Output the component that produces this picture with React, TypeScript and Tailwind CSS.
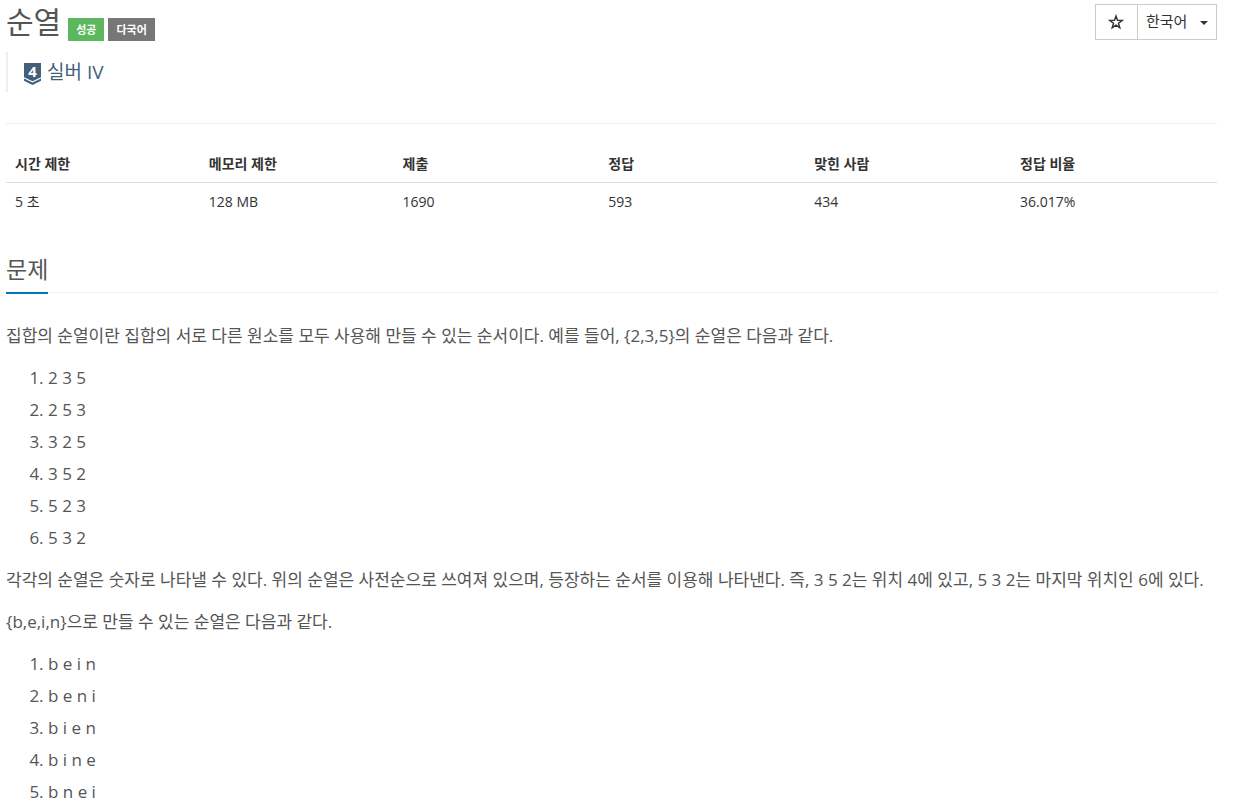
import React from 'react'

const limits = [
  { label: '시간 제한', value: '5 초', width: 'w-[16%]' },
  { label: '메모리 제한', value: '128 MB', width: 'w-[16%]' },
  { label: '제출', value: '1690', width: 'w-[17%]' },
  { label: '정답', value: '593', width: 'w-[17%]' },
  { label: '맞힌 사람', value: '434', width: 'w-[17%]' },
  { label: '정답 비율', value: '36.017%', width: 'w-[17%]' },
]

const numberPermutations = ['2 3 5', '2 5 3', '3 2 5', '3 5 2', '5 2 3', '5 3 2']
const letterPermutations = ['b e i n', 'b e n i', 'b i e n', 'b i n e', 'b n e i']

const TierIcon = () => (
  <svg viewBox="0 -3 17 25" className="h-[25px] w-[17px] overflow-visible" aria-hidden="true">
    <path d="M0 0h17v14.2L8.5 18.2 0 14.2z" fill="#435f7a" />
    <path d="M0 15.6l8.5 4 8.5-4v2.2L8.5 22 0 17.8z" fill="#435f7a" />
    <text
      x="8.5"
      y="14"
      textAnchor="middle"
      fill="#fff"
      className="font-['Open_Sans'] text-[15px] font-bold"
    >
      4
    </text>
  </svg>
)

const PermutationList = ({ items }: { items: string[] }) => (
  <ol className="mb-2.5 list-decimal pl-[42px]">
    {items.map((item) => (
      <li key={item}>{item}</li>
    ))}
  </ol>
)

const App = () => {
  return (
    <main className="bg-white pt-1 pr-6 pl-1.5 font-['Open_Sans','Noto_Sans_CJK_KR',sans-serif] text-[#555]">
      <header className="flex items-start justify-between">
        <div className="flex items-end gap-1">
          <h1 className="mr-[3px] text-[30px] leading-9">순열</h1>
          <span className="-mb-px bg-[#5cb85c] px-2 text-[11px] leading-[23px] font-bold text-white">성공</span>
          <span className="-mb-px bg-[#777] px-2 text-[11px] leading-[23px] font-bold text-white">다국어</span>
        </div>
        <div className="flex h-9 border border-[#ccc] text-[15px] text-[#333]">
          <button type="button" aria-label="즐겨찾기" className="flex w-[42px] items-center justify-center border-r border-[#ccc] pr-px pb-px">
            <svg viewBox="0 0 16 16" className="h-4 w-4" fill="none" stroke="#333" strokeWidth="1.4" aria-hidden="true">
              <path d="M8 2l1.5 4.3 4.7.1-3.7 2.8 1.3 4.5L8 11.1l-3.8 2.6 1.3-4.5-3.7-2.8 4.7-.1z" />
            </svg>
          </button>
          <div className="grid items-center">
            <select aria-label="언어" className="col-start-1 row-start-1 h-full w-[78px] appearance-none bg-transparent px-2 pb-0.5">
              <option>한국어</option>
            </select>
            <svg viewBox="0 0 8 4" className="pointer-events-none col-start-1 row-start-1 mt-0.5 mr-2 h-1 w-2 justify-self-end" aria-hidden="true">
              <path d="M0 0h8L4 4z" fill="#333" />
            </svg>
          </div>
        </div>
      </header>

      <blockquote className="mt-3 flex h-10 items-center gap-1.5 border-l-2 border-[#eee] pl-4 text-[19px] text-[#435f7a]">
        <TierIcon />
        <a href="#tier">실버 IV</a>
      </blockquote>

      <hr className="mt-[31px] border-[#eee]" />

      <table className="mt-5 w-full table-fixed text-left text-sm text-[#333]">
        <thead>
          <tr className="border-b border-[#ddd]">
            {limits.map((limit) => (
              <th key={limit.label} className={`${limit.width} h-[38px] px-[9px] pt-0.5 font-bold`}>
                {limit.label}
              </th>
            ))}
          </tr>
        </thead>
        <tbody>
          <tr>
            {limits.map((limit) => (
              <td key={limit.label} className="h-10 px-[9px]">
                {limit.value}
              </td>
            ))}
          </tr>
        </tbody>
      </table>

      <section>
        <div className="mt-[22px] mb-[27px] border-b border-dotted border-[#e4e9f0]">
          <h2 className="-mb-0.5 inline-block border-b-2 border-[#0076c0] pt-0.5 align-top text-[23px] leading-[46px]">문제</h2>
        </div>
        <div className="text-[17px] leading-8">
          <p className="mb-2.5">
            집합의 순열이란 집합의 서로 다른 원소를 모두 사용해 만들 수 있는 순서이다. 예를 들어, {'{2,3,5}'}의 순열은 다음과 같다.
          </p>
          <PermutationList items={numberPermutations} />
          <p className="mb-2.5">
            각각의 순열은 숫자로 나타낼 수 있다. 위의 순열은 사전순으로 쓰여져 있으며, 등장하는 순서를 이용해 나타낸다. 즉, 3 5 2는 위치 4에 있고, 5 3 2는 마지막 위치인 6에 있다.
          </p>
          <p className="mb-2.5">{'{b,e,i,n}'}으로 만들 수 있는 순열은 다음과 같다.</p>
          <PermutationList items={letterPermutations} />
        </div>
      </section>
    </main>
  )
}

export default App
